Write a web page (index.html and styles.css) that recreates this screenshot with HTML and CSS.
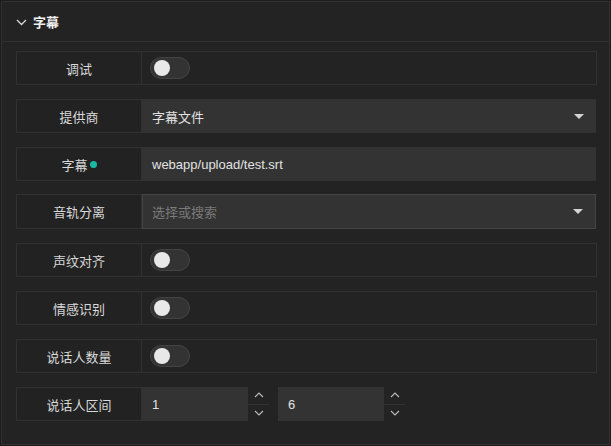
FILE: index.html
```html
<!DOCTYPE html>
<html lang="zh">
<head>
<meta charset="utf-8">
<title>字幕</title>
<link rel="stylesheet" href="styles.css">
</head>
<body>
<div class="panel">
  <div class="panel-header">
    <svg class="chev" width="11" height="7" viewBox="0 0 11 7"><path d="M1 1 L5.5 5.5 L10 1" fill="none" stroke="#d8d8d8" stroke-width="1.3"/></svg>
    <span class="title">字幕</span>
  </div>
  <div class="panel-body">
    <div class="row">
      <div class="label">调试</div>
      <div class="field boxed"><span class="switch"><span class="knob"></span></span></div>
    </div>
    <div class="row">
      <div class="label">提供商</div>
      <div class="field select"><span class="value">字幕文件</span><span class="caret"></span></div>
    </div>
    <div class="row">
      <div class="label">字幕<span class="dot"></span></div>
      <div class="field select"><span class="value">webapp/upload/test.srt</span></div>
    </div>
    <div class="row row-tall">
      <div class="label">音轨分离</div>
      <div class="field select bordered"><span class="placeholder">选择或搜索</span><span class="caret"></span></div>
    </div>
    <div class="row">
      <div class="label">声纹对齐</div>
      <div class="field boxed"><span class="switch"><span class="knob"></span></span></div>
    </div>
    <div class="row">
      <div class="label">情感识别</div>
      <div class="field boxed"><span class="switch"><span class="knob"></span></span></div>
    </div>
    <div class="row">
      <div class="label">说话人数量</div>
      <div class="field boxed"><span class="switch"><span class="knob"></span></span></div>
    </div>
    <div class="row">
      <div class="label">说话人区间</div>
      <div class="field numbers">
        <div class="number">
          <span class="num-input">1</span>
          <span class="stepper">
            <span class="step"><svg width="10" height="6" viewBox="0 0 10 6"><path d="M1 5 L5 1 L9 5" fill="none" stroke="#bbb" stroke-width="1.1"/></svg></span>
            <span class="step"><svg width="10" height="6" viewBox="0 0 10 6"><path d="M1 1 L5 5 L9 1" fill="none" stroke="#bbb" stroke-width="1.1"/></svg></span>
          </span>
        </div>
        <div class="number">
          <span class="num-input">6</span>
          <span class="stepper">
            <span class="step"><svg width="10" height="6" viewBox="0 0 10 6"><path d="M1 5 L5 1 L9 5" fill="none" stroke="#bbb" stroke-width="1.1"/></svg></span>
            <span class="step"><svg width="10" height="6" viewBox="0 0 10 6"><path d="M1 1 L5 5 L9 1" fill="none" stroke="#bbb" stroke-width="1.1"/></svg></span>
          </span>
        </div>
      </div>
    </div>
  </div>
</div>
</body>
</html>
```
FILE: styles.css
```css
html, body {
  margin: 0;
  padding: 0;
  background: #1c1c1c;
}
body {
  font-family: "Liberation Sans", "Noto Sans CJK SC", sans-serif;
  font-size: 13px;
  color: #dcdcdc;
  width: 611px;
  height: 446px;
  overflow: hidden;
}
.panel {
  margin: 1px;
  height: 444px;
  box-sizing: border-box;
  border: 1px solid #313131;
  background: #232323;
}
.panel-header {
  height: 39px;
  border-bottom: 1px solid #313131;
  display: flex;
  align-items: center;
  padding-left: 14px;
}
.chev {
  margin-right: 6px;
  margin-top: 1px;
}
.title {
  font-weight: bold;
  color: #f0f0f0;
  font-size: 13px;
}
.panel-body {
  padding: 9px 12px 0 14px;
}
.row {
  display: flex;
  height: 34px;
  margin-bottom: 14px;
}
.row-tall {
  height: 35px;
  margin-top: -1px;
}
.label {
  width: 126px;
  flex: none;
  box-sizing: border-box;
  border: 1px solid #313131;
  background: #222222;
  display: flex;
  align-items: center;
  justify-content: center;
  color: #d8d8d8;
}
.dot {
  width: 7px;
  height: 7px;
  border-radius: 50%;
  background: #19b9a6;
  margin-left: 2px;
  margin-top: 1px;
}
.field {
  flex: 1;
  display: flex;
  align-items: center;
  box-sizing: border-box;
  position: relative;
}
.boxed {
  border: 1px solid #313131;
  border-left: none;
  padding-left: 8px;
}
.select {
  background: #333333;
  padding-left: 10px;
  padding-right: 12px;
  margin-right: 1px;
  justify-content: space-between;
}
.bordered {
  border: 1px solid #444444;
  padding-left: 9px;
}
.value {
  color: #e2e2e2;
}
.placeholder {
  color: #7a7a7a;
}
.caret {
  width: 0;
  height: 0;
  border-left: 5px solid transparent;
  border-right: 5px solid transparent;
  border-top: 5px solid #d4d4d4;
}
.switch {
  width: 40px;
  height: 22px;
  box-sizing: border-box;
  border-radius: 11px;
  background: #333333;
  border: 1px solid #434343;
  display: flex;
  align-items: center;
  padding-left: 3px;
}
.knob {
  width: 16px;
  height: 16px;
  border-radius: 50%;
  background: #e8e8e8;
}
.numbers {
  gap: 9px;
}
.number {
  display: flex;
  height: 34px;
}
.num-input {
  width: 106px;
  background: #333333;
  display: flex;
  align-items: center;
  padding-left: 10px;
  box-sizing: border-box;
  color: #e2e2e2;
}
.stepper {
  width: 21px;
  display: flex;
  flex-direction: column;
}
.step {
  flex: 1;
  display: flex;
  align-items: center;
  justify-content: center;
}
.step:first-child {
  border-bottom: 1px solid #333333;
}
```
